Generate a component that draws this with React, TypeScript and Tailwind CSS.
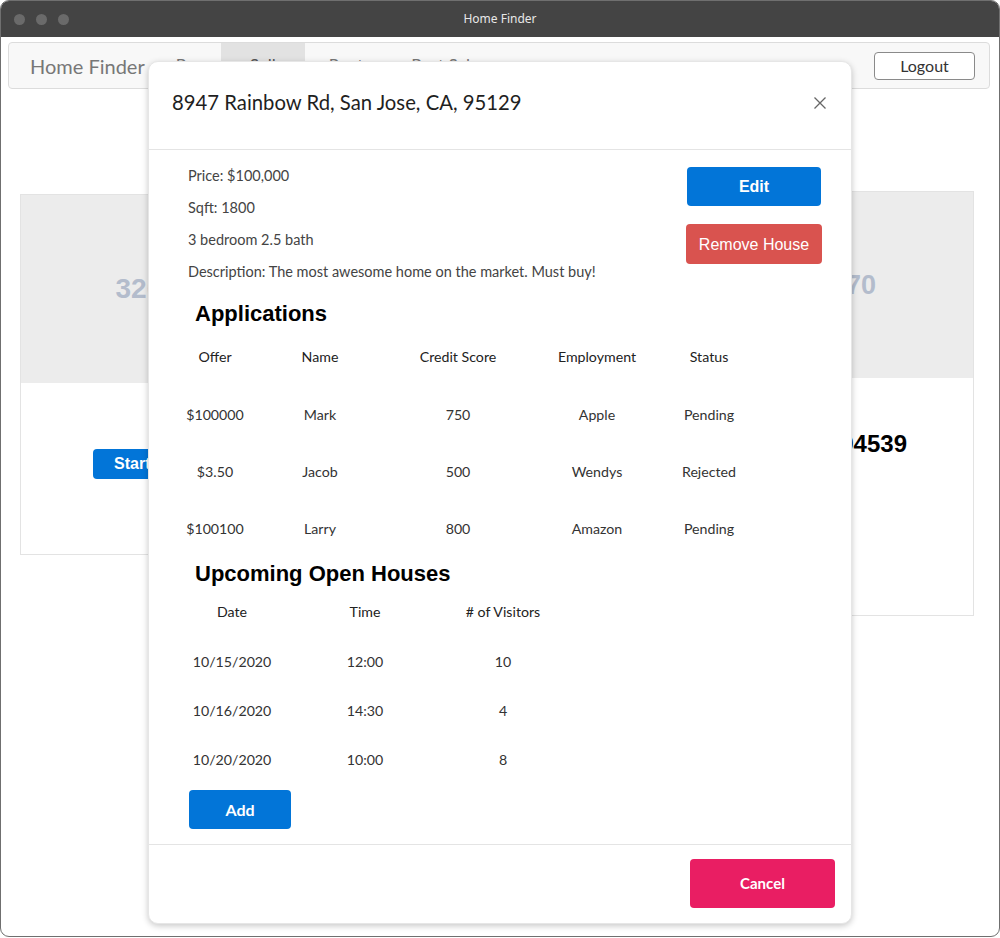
import React from "react";

const apps = [
  ["$100000", "Mark", "750", "Apple", "Pending"],
  ["$3.50", "Jacob", "500", "Wendys", "Rejected"],
  ["$100100", "Larry", "800", "Amazon", "Pending"],
];
const houses = [
  ["10/15/2020", "12:00", "10"],
  ["10/16/2020", "14:30", "4"],
  ["10/20/2020", "10:00", "8"],
];

export default function App() {
  return (
    <div className="w-[1000px] h-[938px] bg-white font-['Lato',sans-serif]">
      <div className="relative w-[1000px] h-[937px] rounded-[9px] border border-[#6f6f6f] overflow-hidden bg-white flex flex-col">
        {/* title bar */}
        <div className="h-[36px] bg-[#444444] flex items-center relative shrink-0">
          <div className="flex gap-[11px] pl-[13px]">
            <span className="w-[11px] h-[11px] rounded-full bg-[#6a6a6a]" />
            <span className="w-[11px] h-[11px] rounded-full bg-[#6a6a6a]" />
            <span className="w-[11px] h-[11px] rounded-full bg-[#6a6a6a]" />
          </div>
          <div className="absolute inset-0 flex items-center justify-center text-[12px] text-[#e8e8e8] font-['Noto_Sans',sans-serif]">
            Home Finder
          </div>
        </div>

        {/* page behind */}
        <div className="flex-1 flex flex-col">
          <div className="ml-[7px] mr-[9px] mt-[5px] h-[47px] bg-[#f8f8f8] border border-[#dcdcdc] rounded-[4px] flex items-stretch">
            <div className="pl-[21px] pr-[15px] flex items-center text-[20px] text-[#777]">Home Finder</div>
            <div className="px-[16px] flex items-center text-[17px] text-[#777]">Buy</div>
            <div className="w-[84px] bg-[#e2e2e2] flex items-center justify-center text-[17px] text-[#555]">Sell</div>
            <div className="px-[24px] flex items-center text-[17px] text-[#777]">Rent</div>
            <div className="px-[24px] flex items-center text-[17px] text-[#777]">Post Sale</div>
            <div className="flex-1" />
            <div className="flex items-center pr-[14px]">
              <div className="w-[101px] h-[28px] border border-[#8a8a8a] rounded-[4px] bg-white flex items-center justify-center text-[16px] text-[#333]">
                Logout
              </div>
            </div>
          </div>

          <div className="flex justify-between items-start pl-[19px] pr-[25px] mt-[102px]">
            <div className="w-[300px] mt-[3px] border border-[#e3e3e3]">
              <div className="h-[188px] bg-[#ececec] flex items-center justify-center text-[28px] font-bold text-[#b3bccc] font-['Liberation_Sans',Arial,sans-serif]">
                320x180
              </div>
              <div className="h-[171px] bg-white flex justify-center pt-[66px]">
                <div className="w-[154px] h-[30px] rounded-[4px] bg-[#0275d8] text-white font-bold text-[16px] font-['Liberation_Sans',Arial,sans-serif] flex items-center pl-[21px]">
                  Start
                </div>
              </div>
            </div>
            <div className="w-[300px] border border-[#e3e3e3]">
              <div className="h-[187px] bg-[#ececec]" />
              <div className="h-[200px]" />
            </div>
            <div className="w-[301px] border border-[#e3e3e3]">
              <div className="h-[186px] bg-[#ececec] flex items-center justify-center text-[27px] font-bold text-[#b3bccc] font-['Liberation_Sans',Arial,sans-serif]">
                320x170
              </div>
              <div className="h-[237px] bg-white pt-[48px] pr-[66px] text-right text-[24px] font-bold text-black font-['Liberation_Sans',Arial,sans-serif]">
                Fremont, CA 94539
              </div>
            </div>
          </div>
        </div>

        {/* modal */}
        <div className="absolute left-[147px] top-[60px] w-[704px] h-[863px] bg-white rounded-[10px] border border-[#e6e6e6] shadow-[0_2px_6px_rgba(0,0,0,0.22)] flex flex-col">
          <div className="h-[88px] shrink-0 border-b border-[#e4e4e4] flex items-center justify-between pl-[23px] pr-[24px] pb-[6px]">
            <div className="text-[20.3px] text-[#1f1f1f]">8947 Rainbow Rd, San Jose, CA, 95129</div>
            <svg width="14" height="14" viewBox="0 0 14 14">
              <path d="M1.5 1.5 L12.5 12.5 M12.5 1.5 L1.5 12.5" stroke="#666" strokeWidth="1.3" fill="none" />
            </svg>
          </div>

          <div className="flex-1 relative">
            <div className="flex justify-between pt-[10px] pl-[39px] pr-[29px]">
              <div className="text-[14.5px] leading-[32px] text-[#444]">
                <div>Price: $100,000</div>
                <div>Sqft: 1800</div>
                <div>3 bedroom 2.5 bath</div>
                <div>Description: The most awesome home on the market. Must buy!</div>
              </div>
              <div className="flex flex-col items-end pt-[7px] gap-[18px]">
                <div className="w-[134px] h-[39px] mr-[1px] rounded-[4px] bg-[#0275d8] text-white font-bold text-[16px] font-['Liberation_Sans',Arial,sans-serif] flex items-center justify-center pt-[1px]">
                  Edit
                </div>
                <div className="w-[136px] h-[40px] rounded-[4px] bg-[#d9534f] text-white text-[16px] font-['Liberation_Sans',Arial,sans-serif] flex items-center justify-center pt-[1px]">
                  Remove House
                </div>
              </div>
            </div>

            <div className="mt-[12px] pl-[46px] h-[26px] flex items-center text-[22px] font-bold text-black font-['Liberation_Sans',Arial,sans-serif]">
              Applications
            </div>
            <div className="ml-[26px] text-[14.2px] text-[#222]">
              <div className="grid grid-cols-[80px_130px_146px_132px_92px] h-[60px] items-center text-center pt-[1px]">
                <div>Offer</div>
                <div>Name</div>
                <div>Credit Score</div>
                <div>Employment</div>
                <div>Status</div>
              </div>
              {apps.map((r, i) => (
                <div key={i} className="grid grid-cols-[80px_130px_146px_132px_92px] h-[57px] items-center text-center text-[#333]">
                  {r.map((c, j) => (
                    <div key={j}>{c}</div>
                  ))}
                </div>
              ))}
            </div>

            <div className="mt-[3px] pl-[46px] h-[26px] flex items-center text-[22px] font-bold text-black font-['Liberation_Sans',Arial,sans-serif]">
              Upcoming Open Houses
            </div>
            <div className="ml-[27px] text-[14.2px] text-[#222]">
              <div className="grid grid-cols-[112px_154px_122px] h-[51px] items-center text-center pt-[1px]">
                <div>Date</div>
                <div>Time</div>
                <div># of Visitors</div>
              </div>
              {houses.map((r, i) => (
                <div key={i} className="grid grid-cols-[112px_154px_122px] h-[49px] items-center text-center text-[#333]">
                  {r.map((c, j) => (
                    <div key={j}>{c}</div>
                  ))}
                </div>
              ))}
            </div>
            <div className="pl-[40px] mt-[6px]">
              <div className="w-[102px] h-[39px] rounded-[4px] bg-[#0275d8] text-white font-bold text-[16px] flex items-center justify-center">
                Add
              </div>
            </div>
          </div>

          <div className="h-[79px] shrink-0 border-t border-[#e4e4e4] flex items-center justify-end pr-[16px] pb-[2px]">
            <div className="w-[145px] h-[49px] rounded-[4px] bg-[#e91e63] text-white font-bold text-[15px] flex items-center justify-center">
              Cancel
            </div>
          </div>
        </div>
      </div>
    </div>
  );
}
